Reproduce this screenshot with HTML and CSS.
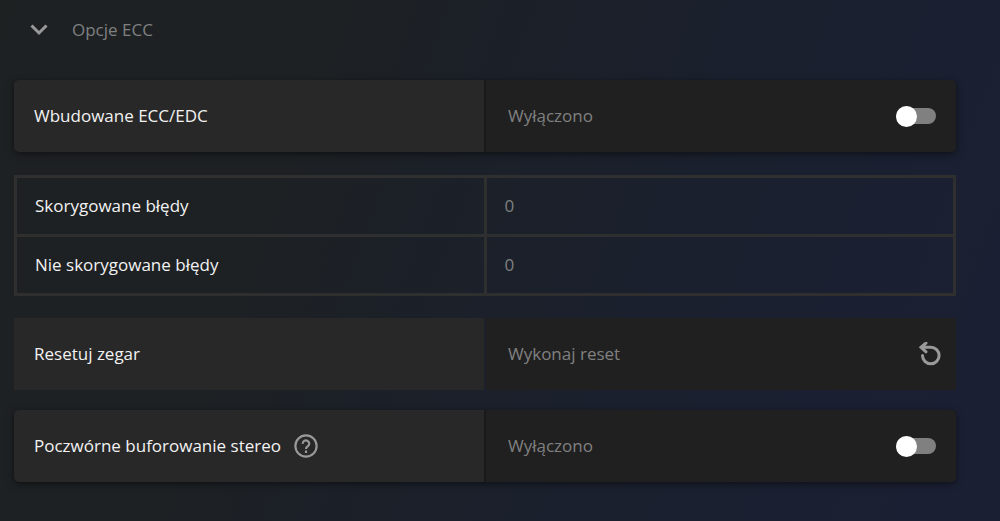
FILE: index.html
```
<!DOCTYPE html>
<html lang="pl">
<head>
    <meta charset="UTF-8">
    <meta name="viewport" content="width=device-width, initial-scale=1.0">
    <title>Opcje ECC</title>
    <link rel="stylesheet" href="styles.css">
</head>
<body>
    <main class="settings">
        <button class="section-toggle" id="section-toggle" aria-expanded="true" aria-controls="options">
            <svg class="chevron" viewBox="0 0 18 12" aria-hidden="true">
                <path d="M1.500 1.500L9 9l7.500-7.500"/>
            </svg>
            <span>Opcje ECC</span>
        </button>

        <div id="options">
            <div class="card raised">
                <label class="name" for="ecc">Wbudowane ECC/EDC</label>
                <div class="value">
                    <span class="state">Wyłączono</span>
                    <input class="switch" type="checkbox" role="switch" id="ecc">
                </div>
            </div>

            <table class="errors">
                <tr>
                    <th scope="row">Skorygowane błędy</th>
                    <td>0</td>
                </tr>
                <tr>
                    <th scope="row">Nie skorygowane błędy</th>
                    <td>0</td>
                </tr>
            </table>

            <div class="card">
                <div class="name" id="reset-name">Resetuj zegar</div>
                <button class="value" aria-describedby="reset-name">
                    <span>Wykonaj reset</span>
                    <svg class="reset-icon" viewBox="0 0 24 24" aria-hidden="true">
                        <path d="M4.500 13.500a8.300 8.300 0 1 0 8.300-8.300H3.500M8 1L3 5.200 8 9.800"/>
                    </svg>
                </button>
            </div>

            <div class="card raised">
                <div class="name">
                    <label for="stereo">Poczwórne buforowanie stereo</label>
                    <button class="help" aria-label="Pomoc">
                        <svg viewBox="0 0 24 24" aria-hidden="true">
                            <circle cx="12" cy="12" r="9.800"/>
                            <path d="M9 10a3 3 0 1 1 4.800 2.200c-1.200.9-1.800 1.200-1.800 2.600M12 16.200v2.200"/>
                        </svg>
                    </button>
                </div>
                <div class="value">
                    <span class="state">Wyłączono</span>
                    <input class="switch" type="checkbox" role="switch" id="stereo">
                </div>
            </div>
        </div>
    </main>

    <script>
        const sectionToggle = document.getElementById('section-toggle');
        const options = document.getElementById('options');

        sectionToggle.addEventListener('click', () => {
            options.hidden = !options.hidden;
            sectionToggle.setAttribute('aria-expanded', String(!options.hidden));
        });

        document.querySelectorAll('.switch').forEach(input => {
            input.addEventListener('change', () => {
                const state = input.parentElement.querySelector('.state');
                state.textContent = input.checked ? 'Włączono' : 'Wyłączono';
            });
        });
    </script>
</body>
</html>
```

FILE: styles.css
```
* {
    box-sizing: border-box;
}

body {
    margin: 0;
    min-height: 100vh;
    font-family: "Open Sans", "Noto Sans", sans-serif;
    font-size: 17px;
    line-height: 24px;
    color: #f2f2f2;
    background: linear-gradient(110deg, #1e2122 0%, #1d2124 28%, #1b202a 50%, #1a2030 75%, #1b1f34 100%);
}

button {
    font: inherit;
    color: inherit;
    border: 0;
    padding: 0;
    background: none;
    cursor: pointer;
}

.settings {
    padding: 18px 44px 24px 14px;
}

.section-toggle {
    display: flex;
    align-items: center;
    gap: 24px;
    margin-bottom: 38px;
    padding-left: 16px;
    color: #7f8081;
}

.chevron {
    width: 18px;
    height: 12px;
    fill: none;
    stroke: #999;
    stroke-width: 3;
}

.section-toggle[aria-expanded="false"] .chevron {
    transform: rotate(-90deg);
}

.card {
    display: grid;
    grid-template-columns: 1fr 1fr;
    gap: 2px;
    min-height: 72px;
    margin-bottom: 20px;
}

.raised {
    border-radius: 5px;
    background-color: #1a1a1a;
    box-shadow: 0 2px 7px rgba(0, 0, 0, 0.5);
    overflow: hidden;
}

.name {
    display: flex;
    align-items: center;
    gap: 12px;
    padding: 0 20px;
    background-color: #282828;
}

.value {
    display: flex;
    align-items: center;
    justify-content: space-between;
    padding: 0 20px 0 22px;
    color: #808080;
    background-color: #202020;
}

button.value {
    padding-right: 14px;
    color: #808080;
    background-color: #202020;
}

.errors {
    width: 100%;
    margin: 23px 0 22px;
    border-collapse: collapse;
    table-layout: fixed;
}

.errors th,
.errors td {
    height: 59px;
    padding: 0 18px;
    border: 3px solid #2f2f2f;
    font-weight: 400;
    text-align: left;
}

.errors td {
    color: #808080;
}

.switch {
    appearance: none;
    display: flex;
    align-items: center;
    width: 40px;
    height: 16px;
    margin: 0;
    border-radius: 8px;
    background-color: #808080;
    cursor: pointer;
}

.switch::before {
    content: "";
    width: 21px;
    height: 21px;
    flex-shrink: 0;
    border-radius: 50%;
    background-color: #fff;
}

.switch:checked {
    justify-content: flex-end;
    background-color: #76b900;
}

.reset-icon {
    width: 24px;
    height: 24px;
    fill: none;
    stroke: #999;
    stroke-width: 3;
    stroke-linecap: round;
}

.help {
    display: flex;
}

.help svg {
    width: 26px;
    height: 26px;
    fill: none;
    stroke: #999;
    stroke-width: 2;
}
```
